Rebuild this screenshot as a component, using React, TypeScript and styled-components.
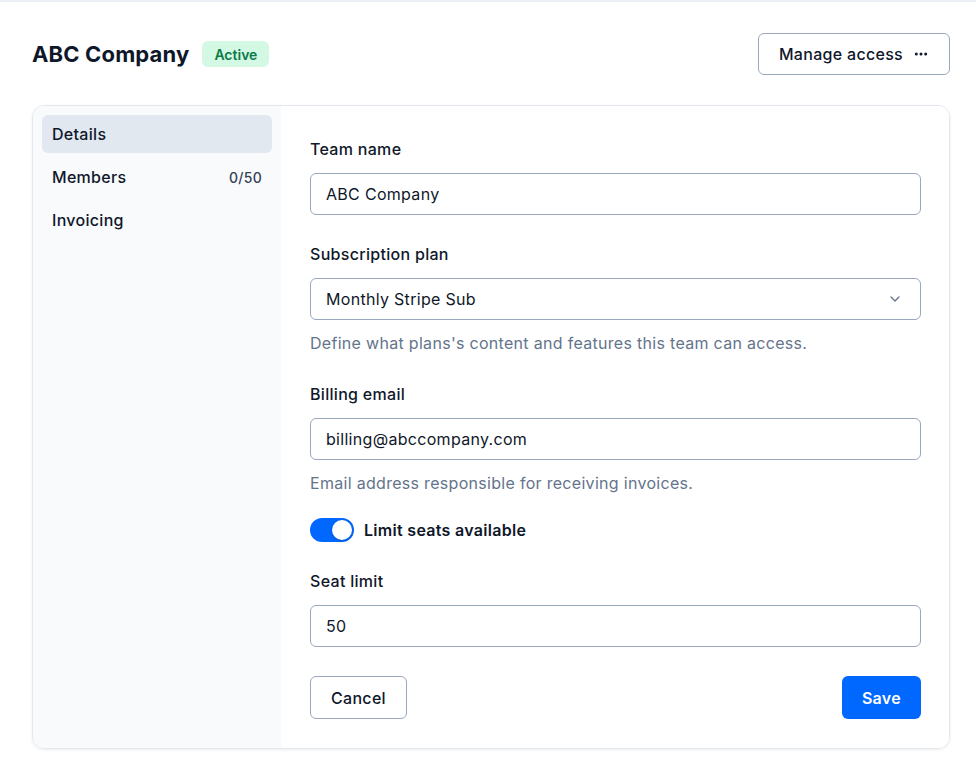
import React, { useState } from "react";
import styled, { createGlobalStyle } from "styled-components";
import { ChevronDown, Ellipsis } from "lucide-react";

const Global = createGlobalStyle`
  html, body { margin: 0; padding: 0; background: #ffffff; }
  body { font-family: Inter, "Noto Sans", sans-serif; color: #0f172a; -webkit-font-smoothing: antialiased; letter-spacing: 0.3px; }
  * { box-sizing: border-box; }
`;

const Page = styled.div`
  border-top: 2px solid #eceff3;
  padding: 31px 26px 24px 32px;
  min-height: 772px;
`;

const Header = styled.header`
  display: flex;
  align-items: center;
  justify-content: space-between;
  height: 42px;
`;

const TitleGroup = styled.div`
  display: flex;
  align-items: center;
  gap: 13px;
`;

const Title = styled.h1`
  margin: 0;
  font-size: 22px;
  font-weight: 700;
  letter-spacing: 0.15px;
  line-height: 28px;
`;

const Badge = styled.span`
  display: inline-flex;
  align-items: center;
  height: 26px;
  padding: 0 12px;
  border-radius: 6px;
  background: #d3f8e3;
  color: #0b7a47;
  font-size: 14px;
  font-weight: 600;
  letter-spacing: 0;
`;

const OutlineButton = styled.button<{ $h?: number }>`
  display: inline-flex;
  align-items: center;
  gap: 10px;
  height: ${(p) => p.$h ?? 42}px;
  padding: 0 20px;
  border: 1px solid #9aa8bd;
  border-radius: 6px;
  background: #ffffff;
  color: #0f172a;
  font-family: inherit;
  font-size: 16px;
  font-weight: 500;
  letter-spacing: 0.3px;
  cursor: pointer;
`;

const PrimaryButton = styled.button`
  display: inline-flex;
  align-items: center;
  height: 43px;
  padding: 0 20px;
  border: none;
  border-radius: 6px;
  background: #0068ff;
  color: #ffffff;
  font-family: inherit;
  font-size: 16px;
  font-weight: 600;
  letter-spacing: 0.3px;
  cursor: pointer;
`;

const Card = styled.section`
  margin-top: 30px;
  display: grid;
  grid-template-columns: 248px 1fr;
  border: 1px solid #e3e8ef;
  border-radius: 12px;
  overflow: hidden;
  box-shadow: 0 1px 3px rgba(15, 23, 42, 0.08);
`;

const Sidebar = styled.nav`
  background: #f8fafc;
  padding: 9px;
  display: flex;
  flex-direction: column;
  gap: 5px;
`;

const NavItem = styled.div<{ $active?: boolean }>`
  display: flex;
  align-items: center;
  justify-content: space-between;
  height: 38px;
  padding: 0 10px;
  border-radius: 6px;
  background: ${(p) => (p.$active ? "#e2e8f0" : "transparent")};
  font-size: 16px;
  font-weight: 500;
  color: #0f172a;
`;

const Count = styled.span`
  font-size: 14px;
  font-weight: 500;
  color: #334155;
`;

const Content = styled.form`
  background: #ffffff;
  padding: 32px 28px 29px 29px;
  display: flex;
  flex-direction: column;
  gap: 28px;
`;

const Field = styled.div`
  display: flex;
  flex-direction: column;
`;

const Label = styled.label`
  font-size: 16px;
  font-weight: 500;
  line-height: 22px;
  margin-bottom: 13px;
  color: #0f172a;
`;

const InputBox = styled.div`
  position: relative;
  display: flex;
  align-items: center;
  height: 42px;
  border: 1px solid #9aa8bd;
  border-radius: 6px;
  background: #ffffff;
`;

const Input = styled.input`
  flex: 1;
  height: 100%;
  border: none;
  outline: none;
  background: transparent;
  padding: 0 15px;
  font-family: inherit;
  font-size: 16px;
  letter-spacing: 0.3px;
  color: #0f172a;
`;

const SelectValue = styled.span`
  flex: 1;
  padding: 0 15px;
  font-size: 16px;
  color: #0f172a;
`;

const Chevron = styled.span`
  display: flex;
  padding-right: 17px;
  color: #64748b;
`;

const Help = styled.p`
  margin: 11px 0 0;
  font-size: 16px;
  line-height: 24px;
  color: #64748b;
`;

const ToggleRow = styled.div`
  display: flex;
  align-items: center;
  gap: 10px;
  margin-top: -5px;
`;

const Track = styled.button<{ $on: boolean }>`
  position: relative;
  width: 44px;
  height: 24px;
  border: none;
  padding: 0;
  border-radius: 12px;
  background: ${(p) => (p.$on ? "#0068ff" : "#cbd5e1")};
  cursor: pointer;
`;

const Knob = styled.span<{ $on: boolean }>`
  position: absolute;
  top: 2px;
  left: ${(p) => (p.$on ? "22px" : "2px")};
  width: 20px;
  height: 20px;
  border-radius: 50%;
  background: #ffffff;
  box-shadow: 0 1px 3px rgba(15, 23, 42, 0.25);
`;

const ToggleLabel = styled.span`
  font-size: 16px;
  font-weight: 600;
  color: #0f172a;
`;

const Actions = styled.div`
  display: flex;
  justify-content: space-between;
  margin-top: 1px;
`;

export default function App() {
  const [on, setOn] = useState(true);
  return (
    <>
      <Global />
      <Page>
        <Header>
          <TitleGroup>
            <Title>ABC Company</Title>
            <Badge>Active</Badge>
          </TitleGroup>
          <OutlineButton type="button">
            Manage access
            <Ellipsis size={16} strokeWidth={2.5} />
          </OutlineButton>
        </Header>
        <Card>
          <Sidebar>
            <NavItem $active>Details</NavItem>
            <NavItem>
              Members <Count>0/50</Count>
            </NavItem>
            <NavItem>Invoicing</NavItem>
          </Sidebar>
          <Content onSubmit={(e) => e.preventDefault()}>
            <Field>
              <Label>Team name</Label>
              <InputBox>
                <Input defaultValue="ABC Company" />
              </InputBox>
            </Field>
            <Field>
              <Label>Subscription plan</Label>
              <InputBox>
                <SelectValue>Monthly Stripe Sub</SelectValue>
                <Chevron>
                  <ChevronDown size={16} />
                </Chevron>
              </InputBox>
              <Help>Define what plans's content and features this team can access.</Help>
            </Field>
            <Field>
              <Label>Billing email</Label>
              <InputBox>
                <Input defaultValue="billing@abccompany.com" />
              </InputBox>
              <Help>Email address responsible for receiving invoices.</Help>
            </Field>
            <ToggleRow>
              <Track type="button" $on={on} onClick={() => setOn(!on)}>
                <Knob $on={on} />
              </Track>
              <ToggleLabel>Limit seats available</ToggleLabel>
            </ToggleRow>
            <Field>
              <Label>Seat limit</Label>
              <InputBox>
                <Input defaultValue="50" />
              </InputBox>
            </Field>
            <Actions>
              <OutlineButton type="button" $h={43}>Cancel</OutlineButton>
              <PrimaryButton type="submit">Save</PrimaryButton>
            </Actions>
          </Content>
        </Card>
      </Page>
    </>
  );
}
